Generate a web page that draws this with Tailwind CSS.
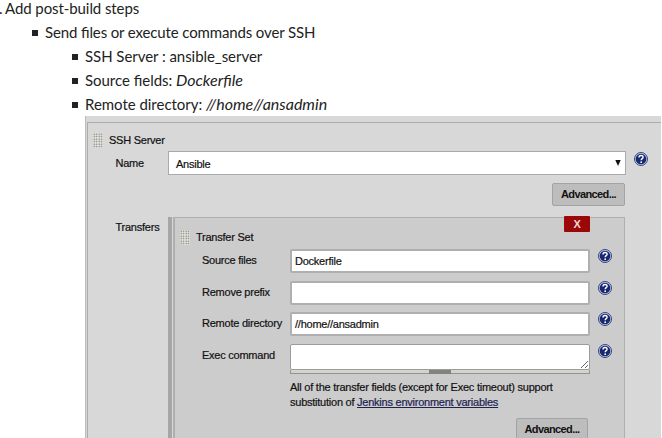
<!DOCTYPE html>
<html lang="en">
<head>
<meta charset="utf-8">
<title>Post-build steps</title>
<script src="https://cdn.jsdelivr.net/npm/@tailwindcss/browser@4"></script>
</head>
<body class="h-[438px] w-[662px] overflow-hidden bg-white text-[#222] font-['Lato',sans-serif]">
<svg class="absolute h-0 w-0">
  <defs>
    <symbol id="help" viewBox="0 0 14 14">
      <circle cx="7" cy="7" r="6.5" fill="#c5cde3" stroke="#34457f" stroke-width="1"/>
      <circle cx="7" cy="7" r="5.3" fill="#17286f"/>
      <path d="M5 5.4C5 2.9 9.1 2.9 9.1 5.2C9.1 6.6 7.2 6.7 7.2 8.2" fill="none" stroke="#fff" stroke-width="1.4"/>
      <circle cx="7.2" cy="10.2" r=".9" fill="#fff"/>
    </symbol>
    <pattern id="dots" width="2.5" height="2.5" patternUnits="userSpaceOnUse">
      <rect width="2.5" height="2.5" fill="#f0f0ec"/>
      <rect x=".5" y=".5" width="1.4" height="1.4" fill="#70706a"/>
    </pattern>
    <symbol id="grip" viewBox="0 0 10 15"><rect width="10" height="15" fill="url(#dots)"/></symbol>
  </defs>
</svg>
<div class="flex h-[116px] flex-col whitespace-nowrap text-[15px] leading-6 tracking-[-0.13px] [font-feature-settings:'liga'_1] [&_em]:text-[16px] [&_em]:tracking-normal">
  <div class="flex h-5 leading-[17px]"><span class="-ml-px w-[6px]">.</span><span class="tracking-[-0.08px]">Add post-build steps</span></div>
  <div class="flex h-6 items-center pl-[32px]"><i class="mr-[7px] mt-px size-[6px] bg-[#222]"></i><span>Send files or execute commands over SSH</span></div>
  <div class="flex h-6 items-center pl-[72px]"><i class="mr-[7px] mt-px size-[6px] bg-[#222]"></i><span class="tracking-[-0.05px]">SSH Server : ansible_server</span></div>
  <div class="flex h-6 items-center pl-[72px]"><i class="mr-[7px] mt-px size-[6px] bg-[#222]"></i><span class="tracking-[-0.03px]">Source fields: <em>Dockerfile</em></span></div>
  <div class="flex h-6 items-center pl-[72px]"><i class="mr-[7px] mt-px size-[6px] bg-[#222]"></i><span class="tracking-[-0.03px]">Remote directory: <em>//home//ansadmin</em></span></div>
</div>
<div class="ml-[85px] h-[322px] w-[576px] border-l border-[#bbb] bg-[#d8d8d8] pl-px pt-[6px] font-['Liberation_Sans',sans-serif] text-[11px] leading-[14px] tracking-[-0.24px] text-[#111] [-webkit-text-stroke:0.2px]">
  <div class="h-[316px] border-l border-t border-[#acacac] pl-[5px] pt-[10px]">
    <div class="flex h-[15px] items-center"><svg class="h-[15px] w-[10px]"><use href="#grip"/></svg><span class="ml-[6px] -mt-[2px]">SSH Server</span></div>
    <div class="mt-[3px] flex h-6">
      <div class="w-[75px] pl-[22.5px] pt-[5px]">Name</div>
      <div class="flex h-6 w-[458px] items-center justify-between border-[1.5px] border-[#aaa] bg-white pl-[7px] pr-[4px]"><span class="mt-px">Ansible</span><svg class="h-[6px] w-[6px]" viewBox="0 0 6 6"><path d="M0.3 0H5.7L3 6Z" fill="#111"/></svg></div>
      <svg class="ml-2 mt-px h-[14px] w-[14px]"><use href="#help"/></svg>
    </div>
    <div class="mt-2 ml-[459px] flex h-[23px] w-[73px] items-center justify-center rounded-[2px] border border-[#a3a3a3] bg-[#bdbdbd] font-bold tracking-[-0.6px] [-webkit-text-stroke:0px]"><span class="-mt-px">Advanced...</span></div>
    <div class="mt-[11px] flex h-[221px]">
      <div class="w-[75px] pl-[22.5px] pt-[3px]">Transfers</div>
      <div class="w-1 bg-[#a6a6a6]"></div>
      <div class="ml-px h-[221px] w-[452px] border-l-2 border-r border-t border-[#afafaf] bg-[#ccc]">
        <div class="-mt-[2px] ml-[389px] flex h-4 w-[26px] items-center justify-center rounded-[1px] bg-[#9b0808] font-bold text-[#f0dada] [-webkit-text-stroke:0px]"><span>X</span></div>
        <div class="-mt-[2px] ml-[5px] flex h-[15px] items-center"><svg class="h-[15px] w-[10px]"><use href="#grip"/></svg><span class="-mt-[2px] ml-[6px]">Transfer Set</span></div>
        <div class="mt-[4px] grid grid-cols-[88px_300px_14px] gap-y-[7.5px] pl-[27px] [&>svg]:ml-2 [&>svg]:h-[14px] [&>svg]:w-[14px]">
          <span class="pt-[4px]">Source files</span><div class="flex h-6 items-center rounded-[2px] border-2 border-[#afafaf] bg-white pl-[3px]"><span class="-mt-px">Dockerfile</span></div><svg><use href="#help"/></svg>
          <span class="pt-[4px]">Remove prefix</span><div class="h-6 rounded-[2px] border-2 border-[#afafaf] bg-white"></div><svg><use href="#help"/></svg>
          <span class="whitespace-nowrap pt-[4px]">Remote directory</span><div class="flex h-6 items-center rounded-[2px] border-2 border-[#afafaf] bg-white pl-[3px]"><span class="-mt-px">//home//ansadmin</span></div><svg><use href="#help"/></svg>
          <span class="pt-[4px]">Exec command</span>
          <div>
            <div class="flex h-[26px] items-end justify-end rounded-[2px] border border-[#9c9c9c] bg-white p-px"><svg class="h-[7px] w-[7px]" viewBox="0 0 7 7"><path d="M0 7L7 0M4 7L7 4" stroke="#555" stroke-width=".9"/></svg></div>
            <div class="flex h-1 justify-center border-x border-b border-[#929888] bg-[#d2d2ce]"><i class="h-1 w-[22px] bg-[#80847a]"></i></div>
          </div><svg><use href="#help"/></svg>
        </div>
        <div class="ml-[115px] mt-[6.5px] whitespace-nowrap leading-[15px]"><div>All of the transfer fields (except for Exec timeout) support</div><div>substitution of <span class="text-[#1d2350] underline">Jenkins environment variables</span></div></div>
        <div class="ml-[341px] mt-[8px] flex h-[23px] w-[72px] items-center justify-center rounded-[2px] border border-[#a3a3a3] bg-[#bdbdbd] font-bold tracking-[-0.6px] [-webkit-text-stroke:0px]"><span class="-mt-px">Advanced...</span></div>
      </div>
    </div>
  </div>
</div>
</body>
</html>
